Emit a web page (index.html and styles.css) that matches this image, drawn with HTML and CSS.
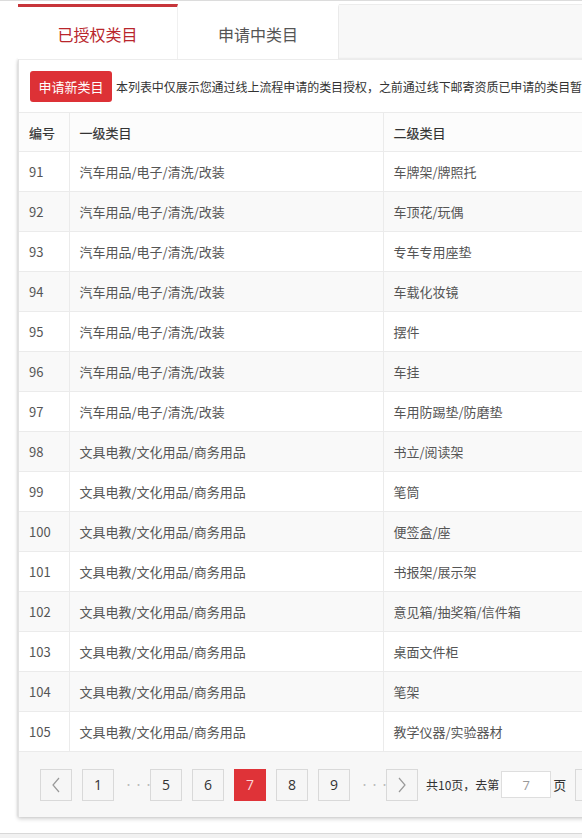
FILE: index.html
```html
<!DOCTYPE html>
<html lang="zh-CN">
<head>
<meta charset="utf-8">
<title>类目管理</title>
<link rel="stylesheet" href="styles.css">
</head>
<body>
<div class="page">
  <div class="topline"></div>
  <div class="main">
    <div class="tabs">
      <div class="tab active">已授权类目</div>
      <div class="tab">申请中类目</div>
    </div>
    <div class="panel">
      <div class="toolbar">
        <button class="btn-apply">申请新类目</button>
        <span class="notice">本列表中仅展示您通过线上流程申请的类目授权，之前通过线下邮寄资质已申请的类目暂</span>
      </div>
      <table class="grid">
        <colgroup>
          <col class="c-no">
          <col class="c-first">
          <col class="c-second">
        </colgroup>
        <thead>
          <tr><th>编号</th><th>一级类目</th><th>二级类目</th></tr>
        </thead>
        <tbody>
          <tr><td>91</td><td>汽车用品/电子/清洗/改装</td><td>车牌架/牌照托</td></tr>
          <tr><td>92</td><td>汽车用品/电子/清洗/改装</td><td>车顶花/玩偶</td></tr>
          <tr><td>93</td><td>汽车用品/电子/清洗/改装</td><td>专车专用座垫</td></tr>
          <tr><td>94</td><td>汽车用品/电子/清洗/改装</td><td>车载化妆镜</td></tr>
          <tr><td>95</td><td>汽车用品/电子/清洗/改装</td><td>摆件</td></tr>
          <tr><td>96</td><td>汽车用品/电子/清洗/改装</td><td>车挂</td></tr>
          <tr><td>97</td><td>汽车用品/电子/清洗/改装</td><td>车用防踢垫/防磨垫</td></tr>
          <tr><td>98</td><td>文具电教/文化用品/商务用品</td><td>书立/阅读架</td></tr>
          <tr><td>99</td><td>文具电教/文化用品/商务用品</td><td>笔筒</td></tr>
          <tr><td>100</td><td>文具电教/文化用品/商务用品</td><td>便签盒/座</td></tr>
          <tr><td>101</td><td>文具电教/文化用品/商务用品</td><td>书报架/展示架</td></tr>
          <tr><td>102</td><td>文具电教/文化用品/商务用品</td><td>意见箱/抽奖箱/信件箱</td></tr>
          <tr><td>103</td><td>文具电教/文化用品/商务用品</td><td>桌面文件柜</td></tr>
          <tr><td>104</td><td>文具电教/文化用品/商务用品</td><td>笔架</td></tr>
          <tr><td>105</td><td>文具电教/文化用品/商务用品</td><td>教学仪器/实验器材</td></tr>
        </tbody>
      </table>
      <div class="pager">
        <a class="pg arrow"><svg width="10" height="16" viewBox="0 0 10 16"><path d="M8 1 L2 8 L8 15" fill="none" stroke="#999" stroke-width="1.2"/></svg></a>
        <a class="pg">1</a>
        <span class="dots">···</span>
        <a class="pg">5</a>
        <a class="pg">6</a>
        <a class="pg current">7</a>
        <a class="pg">8</a>
        <a class="pg">9</a>
        <span class="dots">···</span>
        <a class="pg arrow next"><svg width="10" height="16" viewBox="0 0 10 16"><path d="M2 1 L8 8 L2 15" fill="none" stroke="#999" stroke-width="1.2"/></svg></a>
        <span class="total">共10页，去第</span>
        <input class="jump" type="text" value="7">
        <span class="unit">页</span>
        <a class="pg go"></a>
      </div>
    </div>
  </div>
  <div class="hscroll"></div>
</div>
</body>
</html>
```

FILE: styles.css
```css
html, body {
  margin: 0;
  padding: 0;
  overflow: hidden;
  background: #fff;
}
body {
  font-family: "Noto Sans CJK SC", "Open Sans", sans-serif;
  color: #333;
  width: 582px;
  height: 838px;
}
.page {
  width: 582px;
  height: 838px;
  overflow: hidden;
  display: flex;
  flex-direction: column;
}
.topline {
  height: 1px;
  background: #dcdcdc;
  margin-bottom: 3px;
  flex: none;
}
.main {
  padding-left: 18px;
  width: 1000px;
  height: 824px;
  flex: none;
}
.tabs {
  display: flex;
  height: 55px;
  border-top: 1px solid #ececec;
  background: #f8f8f8;
  box-sizing: border-box;
}
.tab {
  width: 161px;
  box-sizing: border-box;
  background: #fff;
  color: #555;
  font-size: 16px;
  line-height: 54px;
  text-align: center;
  border-right: 1px solid #eaeaea;
  border-top: 3px solid transparent;
  margin-top: -1px;
}
.tab.active {
  width: 160px;
  border-top: 3px solid #c7353a;
  color: #b9262c;
  border-right: 1px solid #f0f0f0;
}
.panel {
  background: #f7f7f7;
  border-top: 1px solid #ececec;
  border-left: 1px solid #e2e2e2;
  box-shadow: 0 2px 4px rgba(0, 0, 0, 0.18), -1px 0 2px rgba(0, 0, 0, 0.08);
  height: 758px;
  box-sizing: border-box;
}
.toolbar {
  height: 52px;
  background: #fff;
  display: flex;
  align-items: center;
  padding-left: 11px;
  white-space: nowrap;
}
.btn-apply {
  width: 82px;
  height: 31px;
  border: none;
  border-radius: 3px;
  background: #dd3136;
  color: #fff;
  font-family: inherit;
  font-size: 13px;
  padding: 0;
  margin-right: 4px;
  margin-top: 1px;
  flex: none;
}
.notice {
  font-size: 12px;
  color: #333;
  letter-spacing: -0.05px;
}
.grid {
  border-collapse: collapse;
  table-layout: fixed;
  width: 980px;
  font-size: 13px;
}
.c-no { width: 50px; }
.c-first { width: 314px; }
.c-second { width: 616px; }
.grid th, .grid td {
  text-align: left;
  padding: 0 10px;
  border-top: 1px solid #ebebeb;
  border-right: 1px solid #ebebeb;
  white-space: nowrap;
}
.grid th {
  height: 38px;
  font-weight: normal;
  color: #333;
  background: #fcfcfc;
  -webkit-text-stroke: 0.2px #333;
}
.grid td {
  height: 39px;
  color: #555;
  background: #fff;
}
.grid tbody tr:nth-child(even) td {
  background: #f9f9f9;
}
.pager {
  height: 66px;
  display: flex;
  align-items: center;
  padding-left: 21px;
  border-top: 1px solid #ebebeb;
  box-sizing: border-box;
  white-space: nowrap;
}
.pg {
  width: 32px;
  height: 32px;
  box-sizing: border-box;
  border: 1px solid #d9d9d9;
  background: #f6f6f6;
  display: flex;
  align-items: center;
  justify-content: center;
  font-size: 14px;
  color: #333;
  margin-right: 10px;
  font-family: "Open Sans", "Noto Sans CJK SC", sans-serif;
  flex: none;
}
.pg.current {
  background: #df3338;
  border-color: #df3338;
  color: #fbd6d7;
}
.dots {
  width: 16px;
  margin-right: 10px;
  color: #bbb;
  font-size: 9px;
  text-align: center;
  letter-spacing: 1px;
  flex: none;
}
.arrow svg { display: block; }
.pg.next { margin-right: 8px; }
.total, .unit {
  font-size: 12px;
  color: #333;
}
.jump {
  width: 50px;
  height: 27px;
  box-sizing: border-box;
  border: 1px solid #dedede;
  background: #fff;
  margin: 0 2px;
  text-align: center;
  color: #999;
  font-size: 13px;
  font-family: "Open Sans", sans-serif;
  padding: 0;
  outline: none;
  flex: none;
}
.unit { margin-right: 9px; font-size: 13px; }
.pg.go {
  width: 50px;
}
.hscroll {
  margin-top: 5px;
  flex: 1;
  border-top: 1px solid #d8d8d8;
  background: #f1f1f1;
}
```
